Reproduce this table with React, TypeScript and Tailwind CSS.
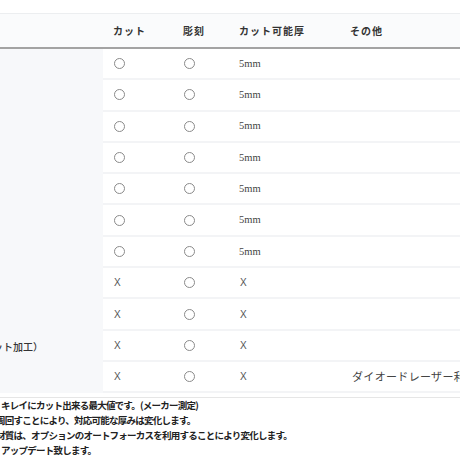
const rows = [
  { cut: "o", eng: "o", thick: "5mm", other: "" },
  { cut: "o", eng: "o", thick: "5mm", other: "" },
  { cut: "o", eng: "o", thick: "5mm", other: "" },
  { cut: "o", eng: "o", thick: "5mm", other: "" },
  { cut: "o", eng: "o", thick: "5mm", other: "" },
  { cut: "o", eng: "o", thick: "5mm", other: "" },
  { cut: "o", eng: "o", thick: "5mm", other: "" },
  { cut: "x", eng: "o", thick: "x", other: "" },
  { cut: "x", eng: "o", thick: "x", other: "" },
  { cut: "x", eng: "o", thick: "x", other: "", label: "（カット加工）" },
  { cut: "x", eng: "o", thick: "x", other: "ダイオードレーザー利用" },
];

const jp = "font-['Noto_Sans_CJK_JP',sans-serif]";

function Mark({ v }: { v: string }) {
  if (v === "o") return <div className="w-[11px] h-[11px] rounded-full border border-[#8a8a8a] ml-[1px]" />;
  if (v === "x") return <span className="text-[10px] text-[#555] font-['Liberation_Sans',sans-serif] ml-[1px]">X</span>;
  return <span className="text-[10.5px] text-[#444] font-['Liberation_Serif',serif] font-medium">{v}</span>;
}

export default function App() {
  return (
    <div className="w-[460px] h-[460px] overflow-hidden bg-white">
      <div className="h-[13px]" />
      {/* header */}
      <div className={`grid grid-cols-[103px_70px_56px_111px_1fr] h-[36px] bg-[#fafbfc] border-t border-[#eceef0] border-b-2 border-b-[#a3a3a3] items-center text-[10px] text-[#333] font-semibold tracking-[0.1em] ${jp}`}>
        <div />
        <div className="pl-[10px]">カット</div>
        <div className="pl-[10px]">彫刻</div>
        <div className="pl-[10px]">カット可能厚</div>
        <div className="pl-[10px]">その他</div>
      </div>
      {/* body */}
      <div className="grid grid-cols-[103px_1fr]">
        <div className="bg-[#f7f8fa] flex flex-col">
          {rows.map((r, i) => (
            <div key={i} className="h-[31.3px] flex items-center overflow-hidden">
              {r.label && <span className={`ml-[-27px] text-[10px] text-[#333] font-medium whitespace-nowrap ${jp}`}>{r.label}</span>}
            </div>
          ))}
        </div>
        <div className="flex flex-col">
          {rows.map((r, i) => (
            <div key={i} className="grid grid-cols-[70px_56px_111px_1fr] h-[31.3px] items-center border-b-2 border-[#f3f4f6] bg-white">
              <div className="pl-[10px] flex items-center"><Mark v={r.cut} /></div>
              <div className="pl-[10px] flex items-center"><Mark v={r.eng} /></div>
              <div className="pl-[10px] flex items-center"><Mark v={r.thick} /></div>
              <div className={`pl-[12px] text-[11px] text-[#444] tracking-[0.03em] whitespace-nowrap ${jp}`}>{r.other}</div>
            </div>
          ))}
        </div>
      </div>
      <div className="h-[4px]" />
      <div className="border-t border-[#e6e6e6]" />
      <div className={`text-[9.5px] leading-[15px] text-[#222] font-semibold tracking-[-0.08em] whitespace-nowrap ${jp}`}>
        <div className="ml-[1px]">キレイにカット出来る最大値です。(メーカー測定)</div>
        <div className="ml-[-4px]">周回すことにより、対応可能な厚みは変化します。</div>
        <div className="ml-[-4px]">材質は、オプションのオートフォーカスを利用することにより変化します。</div>
        <div className="ml-[1px]">アップデート致します。</div>
      </div>
    </div>
  );
}
